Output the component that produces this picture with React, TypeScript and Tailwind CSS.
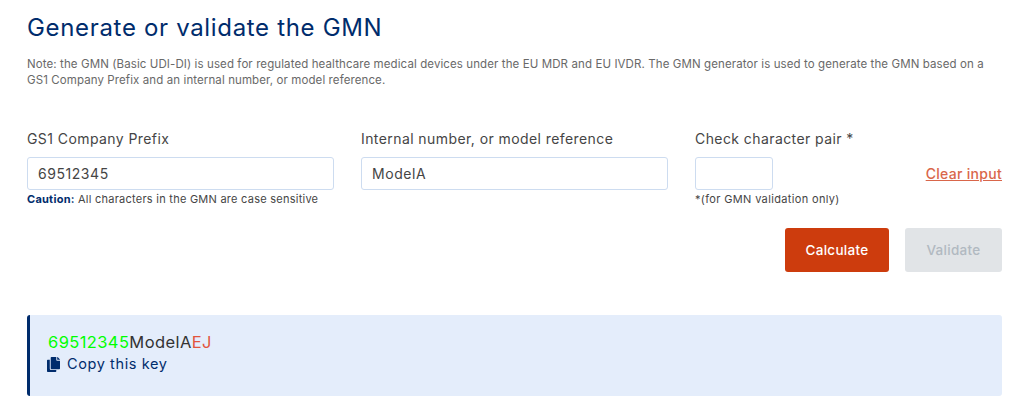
import { FaCopy } from "react-icons/fa";

export default function App() {
  return (
    <div className="w-[1024px] h-[410px] overflow-hidden bg-white pl-[27px] pr-[22px] pt-[13px] font-['Inter',sans-serif] text-[#454545]">
      <h1 className="text-[24px] leading-[30px] tracking-[0.67px] text-[#002c6c]">Generate or validate the GMN</h1>
      <p className="mt-[13px] text-[11.5px] leading-[16px] text-[#696969] tracking-[0.1px]">
        Note: the GMN (Basic UDI-DI) is used for regulated healthcare medical devices under the EU MDR and EU IVDR. The GMN generator is used to generate the GMN based on a GS1 Company Prefix and an internal number, or model reference.
      </p>

      <div className="mt-[41px] flex">
        <div className="w-[307px] mr-[27px]">
          <label className="block text-[14px] leading-[20px] tracking-[0.42px]">GS1 Company Prefix</label>
          <div className="mt-[8px] h-[33px] rounded-[3px] border border-[#cddcf0] px-[10px] text-[14px] leading-[31px] tracking-[0.55px]">69512345</div>
          <p className="mt-[2px] text-[11px] leading-[14px] tracking-[0.25px]"><b className="text-[#002c6c]">Caution:</b> All characters in the GMN are case sensitive</p>
        </div>
        <div className="w-[307px] mr-[27px]">
          <label className="block text-[14px] leading-[20px] tracking-[0.42px]">Internal number, or model reference</label>
          <div className="mt-[8px] h-[33px] rounded-[3px] border border-[#cddcf0] px-[10px] text-[14px] leading-[31px] tracking-[0.55px]">ModelA</div>
        </div>
        <div className="flex-1">
          <label className="block text-[14px] leading-[20px] tracking-[0.42px]">Check character pair *</label>
          <div className="mt-[8px] flex items-center justify-between">
            <div className="h-[33px] w-[78px] rounded-[3px] border border-[#cddcf0]" />
            <a className="text-[14px] font-medium text-[#d9664a] underline tracking-[0.3px]">Clear input</a>
          </div>
          <p className="mt-[2px] text-[11px] leading-[14px] tracking-[0.35px]">*(for GMN validation only)</p>
        </div>
      </div>

      <div className="mt-[22px] flex justify-end gap-[16px]">
        <button className="h-[44px] w-[104px] rounded-[3px] bg-[#cd3c0d] text-[13.5px] font-medium tracking-[0.3px] text-white">Calculate</button>
        <button className="h-[44px] w-[97px] rounded-[3px] bg-[#e1e4e7] text-[13.5px] font-medium tracking-[0.3px] text-[#b1b9c1]">Validate</button>
      </div>

      <div className="mt-[43px] h-[81px] rounded-[3px] border-l-[3px] border-[#002c6c] bg-[#e4edfb] pl-[18px] pt-[17px]">
        <div className="text-[16.5px] leading-[20px] tracking-[0.4px]">
          <span className="text-[#00ff00]">69512345</span>
          <span className="text-[#333333]">ModelA</span>
          <span className="text-[#e2553d]">EJ</span>
        </div>
        <div className="mt-[2px] -ml-[1px] flex items-center gap-[7px] text-[14.5px] leading-[20px] tracking-[0.6px] text-[#002c6c]">
          <FaCopy className="h-[15px] w-[13px]" />
          Copy this key
        </div>
      </div>
    </div>
  );
}
